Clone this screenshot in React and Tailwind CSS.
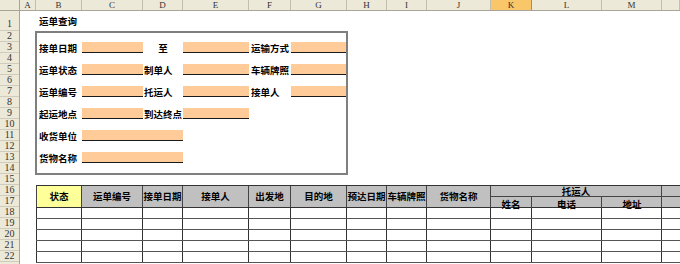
import React from "react";

const cols = [
  { k: "A", w: "w-[16px]" },
  { k: "B", w: "w-[46px]" },
  { k: "C", w: "w-[61px]" },
  { k: "D", w: "w-[40px]" },
  { k: "E", w: "w-[66px]" },
  { k: "F", w: "w-[42px]" },
  { k: "G", w: "w-[56px]" },
  { k: "H", w: "w-[40px]" },
  { k: "I", w: "w-[40px]" },
  { k: "J", w: "w-[64px]" },
  { k: "K", w: "w-[41px]", on: true },
  { k: "L", w: "w-[70px]" },
  { k: "M", w: "w-[60px]" },
  { k: "", w: "flex-1" },
];

const rowNums = Array.from({ length: 22 }, (_, i) => i + 1);

// table columns (B..J single header, K..M grouped under 托运人)
const tableCols = [
  { t: "状态", w: "w-[46px] border-l", bg: "bg-[#FFFF99]" },
  { t: "运单编号", w: "w-[61px]" },
  { t: "接单日期", w: "w-[40px]" },
  { t: "接单人", w: "w-[66px]" },
  { t: "出发地", w: "w-[42px]" },
  { t: "目的地", w: "w-[56px]" },
  { t: "预达日期", w: "w-[40px]" },
  { t: "车辆牌照", w: "w-[40px]" },
  { t: "货物名称", w: "w-[64px]" },
];
const subCols = [
  { t: "姓名", w: "w-[41px]" },
  { t: "电话", w: "w-[70px]" },
  { t: "地址", w: "w-[60px]" },
];

const Label = ({ w, children, center }) => (
  <div
    className={`${w} h-full flex items-end ${center ? "justify-center" : ""} font-bold leading-[10px] whitespace-nowrap text-black`}
  >
    {children}
  </div>
);

const Field = ({ w }) => (
  <div className={`${w} h-full bg-[#FFCC99] border-b border-[#1a1a1a]`} />
);

const Gap = () => <div className="h-[11px]" />;

export default function App() {
  return (
    <div
      className="w-[680px] h-[264px] overflow-hidden bg-white flex flex-col text-[9.5px]"
      style={{ fontFamily: '"Noto Sans CJK SC", "Noto Sans", sans-serif' }}
    >
      {/* column headers */}
      <div className="flex h-[11px] shrink-0 bg-[#ECE9D8] border-b border-[#A8A596] font-['Liberation_Serif',serif] text-[9px] text-[#333]">
        <div className="w-[20px] shrink-0 border-r border-[#A8A596]" />
        {cols.map((c, i) => (
          <div
            key={i}
            className={`${c.w} shrink-0 flex items-center justify-center border-r ${
              c.on ? "bg-[#F9C76A] border-[#B88A3A]" : "border-[#C2BFB0]"
            } leading-none`}
          >
            {c.k}
          </div>
        ))}
      </div>

      <div className="flex flex-1 min-h-0">
        {/* row headers */}
        <div className="w-[20px] shrink-0 bg-[#ECE9D8] border-r border-[#A8A596] flex flex-col font-['Liberation_Serif',serif] text-[10px] text-[#333]">
          {rowNums.map((n) => (
            <div
              key={n}
              className={`${n === 1 ? "h-[20px] items-end pb-[1px]" : "h-[11px] items-center"} shrink-0 flex justify-center border-b border-[#CFCCBD] leading-none`}
            >
              {n}
            </div>
          ))}
        </div>

        {/* sheet */}
        <div className="flex-1 flex flex-col">
          <div className="h-[20px] shrink-0 flex items-center pl-[19px] font-bold">运单查询</div>

          {/* query form box */}
          <div className="ml-[15px] w-[313px] h-[144px] border-2 border-[#7F7F7F] flex flex-col shrink-0">
            <div className="h-[9px]" />
            <div className="flex h-[11px]">
              <Label w="w-[45px] pl-[2px]">接单日期</Label>
              <Field w="w-[61px]" />
              <Label w="w-[40px]" center>至</Label>
              <Field w="w-[66px]" />
              <Label w="w-[42px] pl-[2px]">运输方式</Label>
              <Field w="w-[55px]" />
            </div>
            <Gap />
            <div className="flex h-[11px]">
              <Label w="w-[45px] pl-[2px]">运单状态</Label>
              <Field w="w-[61px]" />
              <Label w="w-[40px] pl-[1px]">制单人</Label>
              <Field w="w-[66px]" />
              <Label w="w-[42px] pl-[2px]">车辆牌照</Label>
              <Field w="w-[55px]" />
            </div>
            <Gap />
            <div className="flex h-[11px]">
              <Label w="w-[45px] pl-[2px]">运单编号</Label>
              <Field w="w-[61px]" />
              <Label w="w-[40px] pl-[1px]">托运人</Label>
              <Field w="w-[66px]" />
              <Label w="w-[42px] pl-[2px]">接单人</Label>
              <Field w="w-[55px]" />
            </div>
            <Gap />
            <div className="flex h-[11px]">
              <Label w="w-[45px] pl-[2px]">起运地点</Label>
              <Field w="w-[61px]" />
              <Label w="w-[40px] pl-[1px]">到达终点</Label>
              <Field w="w-[66px]" />
            </div>
            <Gap />
            <div className="flex h-[11px]">
              <Label w="w-[45px] pl-[2px]">收货单位</Label>
              <Field w="w-[101px]" />
            </div>
            <Gap />
            <div className="flex h-[11px]">
              <Label w="w-[45px] pl-[2px]">货物名称</Label>
              <Field w="w-[101px]" />
            </div>
          </div>

          {/* result table */}
          <div className="mt-[10px] ml-[16px] flex flex-col border-t border-[#333]">
            <div className="flex h-[22px] border-b border-[#333] font-bold">
              {tableCols.map((c) => (
                <div
                  key={c.t}
                  className={`${c.w} ${c.bg || "bg-[#C0C0C0]"} shrink-0 h-full flex items-center justify-center border-r border-[#444] whitespace-nowrap`}
                >
                  {c.t}
                </div>
              ))}
              <div className="w-[171px] shrink-0 flex flex-col bg-[#C0C0C0] border-r border-[#444]">
                <div className="h-[11px] flex items-center justify-center border-b border-[#444]">托运人</div>
                <div className="flex-1 flex">
                  {subCols.map((c, i) => (
                    <div
                      key={c.t}
                      className={`${c.w} shrink-0 flex items-center justify-center ${i < 2 ? "border-r border-[#444]" : ""}`}
                    >
                      {c.t}
                    </div>
                  ))}
                </div>
              </div>
              <div className="flex-1 flex flex-col bg-[#C0C0C0]">
                <div className="h-[11px] border-b border-[#444]" />
              </div>
            </div>

            {[0, 1, 2, 3, 4].map((r) => (
              <div key={r} className="flex h-[11px] border-b border-[#555]">
                {tableCols.map((c) => (
                  <div key={c.t} className={`${c.w} shrink-0 h-full border-r border-[#333]`} />
                ))}
                {subCols.map((c) => (
                  <div key={c.t} className={`${c.w} shrink-0 h-full border-r border-[#333]`} />
                ))}
                <div className="flex-1" />
              </div>
            ))}
          </div>
        </div>
      </div>
    </div>
  );
}
